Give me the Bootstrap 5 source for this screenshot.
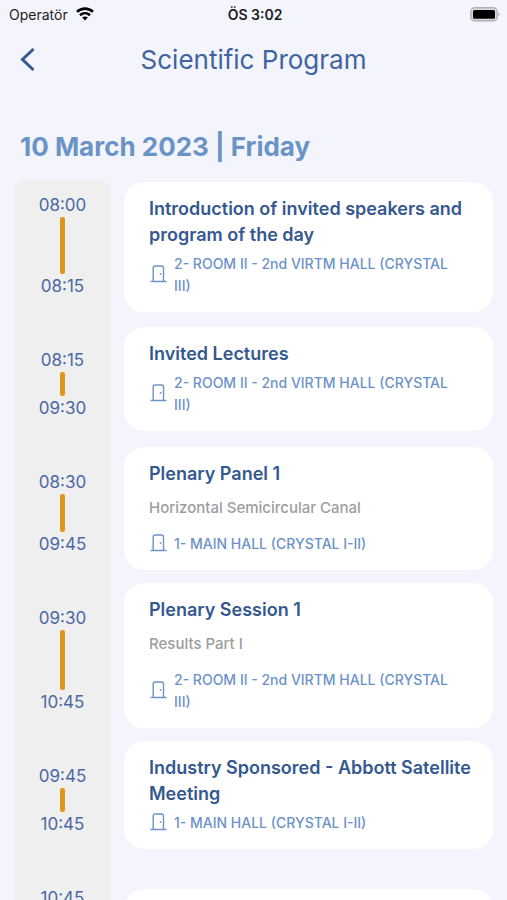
<!DOCTYPE html>
<html lang="en">
<head>
<meta charset="utf-8">
<meta name="viewport" content="width=device-width, initial-scale=1">
<title>Scientific Program</title>
<link href="https://cdn.jsdelivr.net/npm/bootstrap@5.3.0/dist/css/bootstrap.min.css" rel="stylesheet">
<style>
  body { background: #f3f4fc; font-family: Inter, "Open Sans", sans-serif; color: #34588f; }
  .status-bar { height: 28px; padding: 0 6px 0 9px; font-size: 14px; color: #1c1c1e; }
  .status-clock { font-weight: 600; }
  .app-bar { height: 64px; padding: 0 18px; }
  .back-btn { width: 20px; color: #34588f; line-height: 1; }
  .app-title { padding-right: 20px; font-size: 26px; line-height: 32px; font-weight: 400; color: #3f64a0; }
  .day-title { margin: 39px 20px 17px; font-size: 26px; line-height: 32px; font-weight: 700; color: #6a93c6; }
  .agenda { padding: 0 14px; }
  .agenda-row { gap: 13px; }
  .time-col { width: 97px; padding: 25px 0; background: #efefef; font-size: 17px; line-height: 24px; color: #4a68a4; }
  .agenda-row:first-child .time-col { padding-top: 13px; border-radius: 12px 12px 0 0; }
  .time-bar { width: 5px; min-height: 24px; border-radius: 2px; background: #df951f; }
  .session { min-width: 0; margin: 2px 0 11px; padding: 14px 20px 15px 25px; border: 0; border-radius: 20px; }
  .session-title { font-size: 18px; line-height: 26px; font-weight: 600; color: #34588f; }
  .session-note { margin: 10px 0 9px; font-size: 15px; line-height: 22px; font-weight: 500; color: #9d9d9d; }
  .session-room { gap: 7px; margin-top: 5px; font-size: 14px; line-height: 22px; font-weight: 500; color: #6c92c9; }
  .session-next { margin-top: 28px; }
</style>
</head>
<body>
<div class="status-bar d-flex align-items-center">
  <div class="col d-flex align-items-center gap-2">
    <span>Operatör</span>
    <svg width="18" height="14" viewBox="0 0 18 14" fill="none" stroke="#000" stroke-width="2.6" aria-hidden="true">
      <path d="M1 4.8C5.600 .5 12.400 .5 17 4.800"/><path d="M4 8.200C6.900 5.500 11.100 5.500 14 8.200"/>
      <path d="M6.200 10.600C7.800 9.200 10.200 9.200 11.800 10.600L9 13.500Z" fill="#000" stroke="none"/>
    </svg>
  </div>
  <span class="status-clock">ÖS 3:02</span>
  <div class="col d-flex justify-content-end">
    <svg width="31" height="15" viewBox="0 0 31 15" aria-hidden="true">
      <rect x=".8" y=".8" width="26.400" height="13" rx="4" fill="#dcdce0" stroke="#b4b4b8" stroke-width="1.500"/>
      <rect x="3" y="3" width="22" height="8.800" rx="1.600"/><path d="M28.500 5Q31 7.300 28.500 9.600Z" fill="#b4b4b8"/>
    </svg>
  </div>
</div>
<header class="app-bar d-flex align-items-center">
  <button type="button" class="back-btn btn p-0 border-0" aria-label="Back">
    <svg width="20" height="26" viewBox="0 0 20 26" fill="none" stroke="currentColor" stroke-width="3" aria-hidden="true"><path d="M15.500 2 4.500 12.500 15.500 23"/></svg>
  </button>
  <h1 class="app-title flex-grow-1 text-center mb-0">Scientific Program</h1>
</header>
<main>
  <svg class="d-none" aria-hidden="true">
    <symbol id="door" viewBox="0 0 18 20"><path d="M2 16.500H17M4.200 16.500V3Q4.200 1 6.200 1H12.500Q14.500 1 14.500 3V16.500" fill="none" stroke="currentColor" stroke-width="1.400" stroke-linecap="round"/><circle cx="11.500" cy="9" r=".9" fill="currentColor"/></symbol>
  </svg>
  <h2 class="day-title">10 March 2023 | Friday</h2>
  <ol class="agenda list-unstyled mb-0">
    <li class="agenda-row d-flex">
      <div class="time-col d-flex flex-column align-items-center flex-shrink-0"><time>08:00</time><span class="time-bar flex-grow-1"></span><time>08:15</time></div>
      <article class="session card flex-grow-1">
        <h3 class="session-title mb-0">Introduction of invited speakers and program of the day</h3>
        <div class="session-room d-flex align-items-center pe-3"><svg class="flex-shrink-0" width="18" height="20" aria-hidden="true"><use href="#door"/></svg><span>2- ROOM II - 2nd VIRTM HALL (CRYSTAL III)</span></div>
      </article>
    </li>
    <li class="agenda-row d-flex">
      <div class="time-col d-flex flex-column align-items-center flex-shrink-0"><time>08:15</time><span class="time-bar flex-grow-1"></span><time>09:30</time></div>
      <article class="session card flex-grow-1 align-self-start mt-1">
        <h3 class="session-title mb-0">Invited Lectures</h3>
        <div class="session-room d-flex align-items-center pe-3"><svg class="flex-shrink-0" width="18" height="20" aria-hidden="true"><use href="#door"/></svg><span>2- ROOM II - 2nd VIRTM HALL (CRYSTAL III)</span></div>
      </article>
    </li>
    <li class="agenda-row d-flex">
      <div class="time-col d-flex flex-column align-items-center flex-shrink-0"><time>08:30</time><span class="time-bar flex-grow-1"></span><time>09:45</time></div>
      <article class="session card flex-grow-1">
        <h3 class="session-title mb-0">Plenary Panel 1</h3>
        <p class="session-note">Horizontal Semicircular Canal</p>
        <div class="session-room d-flex align-items-center pe-3"><svg class="flex-shrink-0" width="18" height="20" aria-hidden="true"><use href="#door"/></svg><span>1- MAIN HALL (CRYSTAL I-II)</span></div>
      </article>
    </li>
    <li class="agenda-row d-flex">
      <div class="time-col d-flex flex-column align-items-center flex-shrink-0"><time>09:30</time><span class="time-bar flex-grow-1"></span><time>10:45</time></div>
      <article class="session card flex-grow-1">
        <h3 class="session-title mb-0">Plenary Session 1</h3>
        <p class="session-note">Results Part I</p>
        <div class="session-room d-flex align-items-center pe-3"><svg class="flex-shrink-0" width="18" height="20" aria-hidden="true"><use href="#door"/></svg><span>2- ROOM II - 2nd VIRTM HALL (CRYSTAL III)</span></div>
      </article>
    </li>
    <li class="agenda-row d-flex">
      <div class="time-col d-flex flex-column align-items-center flex-shrink-0"><time>09:45</time><span class="time-bar flex-grow-1"></span><time>10:45</time></div>
      <article class="session card flex-grow-1 align-self-start">
        <h3 class="session-title mb-0">Industry Sponsored - Abbott Satellite Meeting</h3>
        <div class="session-room d-flex align-items-center pe-3"><svg class="flex-shrink-0" width="18" height="20" aria-hidden="true"><use href="#door"/></svg><span>1- MAIN HALL (CRYSTAL I-II)</span></div>
      </article>
    </li>
    <li class="agenda-row d-flex">
      <div class="time-col d-flex flex-column align-items-center flex-shrink-0"><time>10:45</time><span class="time-bar flex-grow-1"></span></div>
      <article class="session session-next card flex-grow-1"></article>
    </li>
  </ol>
</main>
<script src="https://cdn.jsdelivr.net/npm/bootstrap@5.3.0/dist/js/bootstrap.bundle.min.js"></script>
</body>
</html>
